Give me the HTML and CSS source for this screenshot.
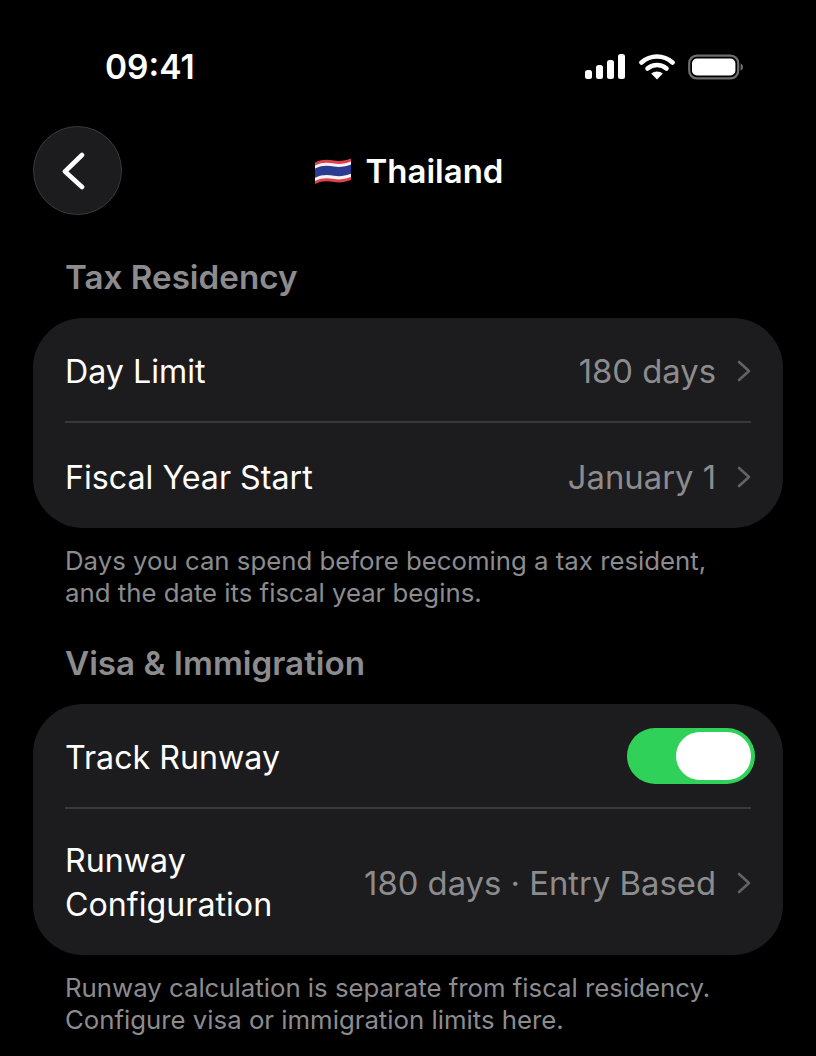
FILE: index.html
```html
<!DOCTYPE html>
<html lang="en">
<head>
<meta charset="utf-8">
<title>Thailand</title>
<link rel="stylesheet" href="styles.css">
</head>
<body>
<div class="screen">
  <div class="status">
    <span class="time">09:41</span>
    <div class="status-icons">
      <svg class="signal" width="42" height="26" viewBox="0 0 42 26"><rect x="1" y="16" width="7" height="9" rx="2.5"/><rect x="12" y="11" width="7" height="14" rx="2.5"/><rect x="23" y="6" width="7" height="19" rx="2.5"/><rect x="34" y="0" width="7" height="25" rx="2.5"/></svg>
      <svg class="wifi" width="36" height="26" viewBox="0 0 36 26"><path d="M2.5 8.5C11.5 0.5 24.5 0.5 33.5 8.5" /><path d="M8.5 14.5C14 9.8 22 9.8 27.5 14.5"/><path class="wifi-dot" d="M18 25.5L12.2 19.6C15.5 16.8 20.5 16.8 23.8 19.6Z"/></svg>
      <svg class="battery" width="56" height="26" viewBox="0 0 56 26"><rect class="battery-shell" x="1.2" y="1.7" width="49" height="22.6" rx="7.5"/><rect class="battery-fill" x="4" y="4.5" width="43.4" height="17" rx="5"/><path class="battery-cap" d="M52.6 9.5c1.600 .5 2.400 2 2.400 3.500s-.8 3-2.400 3.500z"/></svg>
    </div>
  </div>

  <header class="nav">
    <button class="back" aria-label="Back">
      <svg width="26" height="38" viewBox="0 0 26 38"><path d="M22 3L5 19.500L22 35"/></svg>
    </button>
    <h1 class="title">
      <svg class="flag" width="38" height="28" viewBox="0 0 38 28"><path fill="#e0404c" d="M1 5.500C8 2 14 2.500 20 3.500C26 4.500 32 3.500 37 1.500V23C31 25 26 26 20 25C14 24 8 23.500 1 27Z"/><path fill="#f6f2f2" d="M1 8.500C8 5 14 5.500 20 6.500C26 7.500 32 6.500 37 4.500V20C31 22 26 23 20 22C14 21 8 20.500 1 24Z"/><path fill="#2b3b8f" d="M1 11.500C8 8 14 8.500 20 9.500C26 10.500 32 9.500 37 7.500V16.800C31 18.800 26 19.800 20 18.800C14 17.800 8 17.300 1 20.800Z"/></svg>
      <span>Thailand</span>
    </h1>
  </header>

  <section class="section section-first">
    <h2 class="section-title">Tax Residency</h2>
    <div class="card">
      <div class="row row-top">
        <span class="label">Day Limit</span>
        <span class="value">180 days</span>
        <svg class="chev" width="14" height="22" viewBox="0 0 14 22"><path d="M2 2L12 11L2 20"/></svg>
      </div>
      <div class="divider"></div>
      <div class="row row-bottom">
        <span class="label">Fiscal Year Start</span>
        <span class="value">January 1</span>
        <svg class="chev" width="14" height="22" viewBox="0 0 14 22"><path d="M2 2L12 11L2 20"/></svg>
      </div>
    </div>
    <p class="note">Days you can spend before becoming a tax resident,<br>and the date its fiscal year begins.</p>
  </section>

  <section class="section section-second">
    <h2 class="section-title">Visa &amp; Immigration</h2>
    <div class="card">
      <div class="row row-top">
        <span class="label">Track Runway</span>
        <div class="switch"><div class="knob"></div></div>
      </div>
      <div class="divider"></div>
      <div class="row row-double">
        <span class="label">Runway<br>Configuration</span>
        <span class="value">180 days · Entry Based</span>
        <svg class="chev" width="14" height="22" viewBox="0 0 14 22"><path d="M2 2L12 11L2 20"/></svg>
      </div>
    </div>
    <p class="note">Runway calculation is separate from fiscal residency.<br>Configure visa or immigration limits here.</p>
  </section>
</div>
</body>
</html>
```
FILE: styles.css
```css
* { box-sizing: border-box; }
html, body { margin: 0; padding: 0; background: #000; }
body { font-family: Inter, "Noto Sans", "Liberation Sans", sans-serif; color: #fff; }
.screen { width: 816px; height: 1056px; overflow: hidden; background: #000; padding: 0 33px; }

.status { height: 126px; display: flex; justify-content: space-between; align-items: flex-start; padding: 47px 39px 0 72px; }
.time { font-size: 33.5px; line-height: 40px; font-weight: 600; }
.status-icons { display: flex; align-items: center; gap: 13px; padding-top: 7px; }
.signal { fill: #fff; }
.wifi path { fill: none; stroke: #fff; stroke-width: 4.6px; stroke-linecap: round; }
.wifi .wifi-dot { fill: #fff; stroke: none; }
.battery-shell { fill: none; stroke: #6e6e6e; stroke-width: 2.2px; }
.battery-fill { fill: #fff; }
.battery-cap { fill: #6e6e6e; }

.nav { height: 90px; display: flex; align-items: center; position: relative; justify-content: center; }
.back { position: absolute; left: 0; top: 0; width: 89px; height: 89px; border-radius: 50%; background: #1c1c1e; border: 1px solid #3a3a3c; padding: 0; display: flex; align-items: center; justify-content: center; }
.back svg { margin-right: 9px; }
.back path { fill: none; stroke: #fff; stroke-width: 4.6px; stroke-linecap: round; stroke-linejoin: round; }
.title { margin: 0 0 0 1px; display: flex; align-items: center; gap: 14px; font-size: 33px; line-height: 40px; font-weight: 600; }
.flag { display: block; }

.section-first { padding-top: 40px; }
.section-second { padding-top: 33px; }
.section-title { margin: 0 0 20px; padding-left: 32px; font-size: 33.2px; line-height: 42px; font-weight: 600; color: #8c8c8f; }
.card { background: #1c1c1e; border-radius: 50px; display: flex; flex-direction: column; padding: 0 32px; }
.row { display: flex; align-items: center; }
.row-top { height: 103px; padding-top: 4px; }
.row-bottom { height: 105px; padding-top: 4px; }
.row-double { height: 146px; padding-top: 2px; }
.label { font-size: 32.2px; line-height: 44px; flex: 1; color: #fff; }
.value { font-size: 32.8px; line-height: 44px; color: #8c8c8f; margin-right: 21px; }
.chev { flex: none; }
.row-top .value, .row-top .chev, .row-bottom .value, .row-bottom .chev { margin-top: -2px; }
.chev path { fill: none; stroke: #636366; stroke-width: 2.6px; stroke-linecap: round; stroke-linejoin: round; }
.divider { height: 2px; background: #38383a; }
.switch { width: 128px; height: 56px; margin: -4px -4px 0 0; border-radius: 28px; background: #30d158; padding: 4px; display: flex; justify-content: flex-end; }
.knob { width: 75px; height: 48px; border-radius: 24px; background: #fff; }
.note { margin: 17px 0 0; padding-left: 32px; font-size: 25.78px; line-height: 32px; color: #8c8c8f; }
```
